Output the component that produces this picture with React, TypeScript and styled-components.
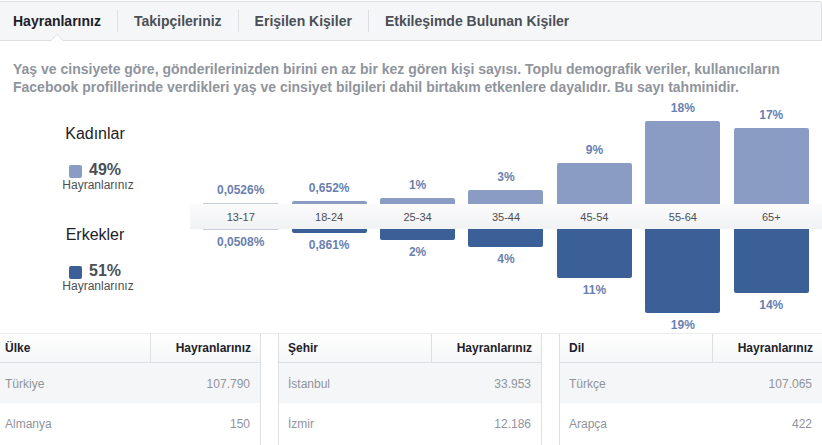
import React from "react";
import styled, { createGlobalStyle } from "styled-components";

const GlobalStyle = createGlobalStyle`
  html, body { margin: 0; padding: 0; background: #fff; }
  body { font-family: "Liberation Sans", Arial, Helvetica, sans-serif; overflow: hidden; }
  * { box-sizing: border-box; }
`;

const Page = styled.div`
  width: 822px;
  height: 445px;
  padding-top: 1px;
  overflow: hidden;
`;

const TabBar = styled.div`
  display: flex;
  align-items: center;
  height: 40px;
  background: #f5f6f7;
  border-top: 1px solid #dddfe2;
  border-bottom: 1px solid #dddfe2;
  border-right: 1px solid #dddfe2;
  border-top-right-radius: 3px;
  padding-left: 13px;
`;

const Tab = styled.div<{ $active?: boolean; $first?: boolean }>`
  position: relative;
  display: flex;
  align-items: center;
  height: 22px;
  padding: 0 16px 0 ${(p) => (p.$first ? "0" : "16px")};
  border-left: ${(p) => (p.$first ? "none" : "1px solid #dddfe2")};
  font-size: 14px;
  font-weight: bold;
  color: ${(p) => (p.$active ? "#1d2129" : "#4b4f56")};
  white-space: nowrap;
`;

const Caret = styled.span`
  position: absolute;
  left: 37px;
  bottom: -9px;
  width: 0;
  height: 0;
  border-left: 7px solid transparent;
  border-right: 7px solid transparent;
  border-bottom: 7px solid #dddfe2;
  &::after {
    content: "";
    position: absolute;
    left: -6px;
    top: 1px;
    border-left: 6px solid transparent;
    border-right: 6px solid transparent;
    border-bottom: 6px solid #fff;
  }
`;

const Description = styled.p`
  margin: 0;
  padding: 19px 13px 0;
  font-size: 14px;
  line-height: 18px;
  font-weight: bold;
  color: #90949c;
  height: 54px;
  white-space: nowrap;
`;

const Chart = styled.div`
  display: grid;
  grid-template-columns: 190px 1fr;
  height: 239px;
  border-bottom: 1px solid #e9ebee;
`;

const Legend = styled.div`
  display: flex;
  flex-direction: column;
  align-items: center;
  padding-top: 29px;
`;

const LegendGroup = styled.div<{ $gap: number }>`
  display: flex;
  flex-direction: column;
  align-items: center;
  margin-bottom: ${(p) => p.$gap}px;
`;

const LegendTitle = styled.div`
  font-size: 16px;
  line-height: 20px;
  color: #1d2129;
  margin-bottom: 17px;
`;

const LegendRow = styled.div`
  display: flex;
  align-items: center;
  gap: 7px;
  height: 18px;
`;

const Swatch = styled.span<{ $color: string }>`
  width: 13px;
  height: 13px;
  border-radius: 2px;
  background: ${(p) => p.$color};
  margin-top: 3px;
`;

const LegendPct = styled.span`
  font-size: 16px;
  font-weight: bold;
  color: #4b4f56;
`;

const LegendSub = styled.div`
  font-size: 12px;
  line-height: 13px;
  color: #4b4f56;
  margin-left: 6px;
`;

const Plot = styled.div`
  display: grid;
  grid-template-rows: 109px 25px 1fr;
`;

const BarRow = styled.div`
  display: grid;
  grid-template-columns: repeat(7, 1fr);
  padding: 0 6.5px;
`;

const BarCol = styled.div<{ $down?: boolean }>`
  display: flex;
  flex-direction: column;
  align-items: center;
  justify-content: ${(p) => (p.$down ? "flex-start" : "flex-end")};
`;

const Bar = styled.div<{ $down?: boolean; $tiny?: boolean }>`
  width: 75px;
  background: ${(p) => (p.$tiny ? "#c6ccd8" : p.$down ? "#3b6097" : "#8a9cc3")};
  border-radius: ${(p) => (p.$tiny ? "0" : p.$down ? "0 0 2px 2px" : "2px 2px 0 0")};
`;

const BarLabel = styled.div<{ $down?: boolean }>`
  font-size: 12px;
  line-height: 14px;
  font-weight: bold;
  color: #6a7fb0;
  margin: ${(p) => (p.$down ? "5px 0 0" : "0 0 6px")};
`;

const Axis = styled.div`
  display: grid;
  grid-template-columns: repeat(7, 1fr);
  padding: 0 6.5px;
  background: linear-gradient(#fbfbfc, #f1f2f4);
  align-items: center;
`;

const AxisLabel = styled.div`
  text-align: center;
  font-size: 11px;
  color: #4b4f56;
`;

const Tables = styled.div`
  display: grid;
  grid-template-columns: 261px 264px 1fr;
  column-gap: 17px;
`;

const Table = styled.div<{ $left?: boolean; $right?: boolean }>`
  display: grid;
  grid-template-columns: 1fr 110px;
  grid-auto-rows: 40px;
  grid-template-rows: 29px;
  border-left: ${(p) => (p.$left ? "1px solid #dddfe2" : "none")};
  border-right: ${(p) => (p.$right ? "1px solid #dddfe2" : "none")};
  height: 111px;
`;

const HeadCell = styled.div<{ $num?: boolean; $pl: number }>`
  display: flex;
  align-items: center;
  justify-content: ${(p) => (p.$num ? "flex-end" : "flex-start")};
  padding: 0 9px 0 ${(p) => (p.$num ? 0 : p.$pl)}px;
  background: linear-gradient(#ffffff, #f5f6f7);
  border-bottom: 1px solid #dddfe2;
  border-left: ${(p) => (p.$num ? "1px solid #dddfe2" : "none")};
  font-size: 12px;
  font-weight: bold;
  color: #1d2129;
`;

const Cell = styled.div<{ $num?: boolean; $shade?: boolean; $pl: number }>`
  display: flex;
  align-items: center;
  justify-content: ${(p) => (p.$num ? "flex-end" : "flex-start")};
  padding: 1px 10px 0 ${(p) => (p.$num ? 0 : p.$pl)}px;
  background: ${(p) => (p.$shade ? "#f5f6f7" : "#fff")};
  font-size: 12px;
  color: #90949c;
`;

type Group = { age: string; f: number; fl: string; m: number; ml: string };

const groups: Group[] = [
  { age: "13-17", f: 1, fl: "0,0526%", m: 1, ml: "0,0508%" },
  { age: "18-24", f: 3, fl: "0,652%", m: 4, ml: "0,861%" },
  { age: "25-34", f: 6, fl: "1%", m: 11, ml: "2%" },
  { age: "35-44", f: 14, fl: "3%", m: 18, ml: "4%" },
  { age: "45-54", f: 41, fl: "9%", m: 49, ml: "11%" },
  { age: "55-64", f: 83, fl: "18%", m: 84, ml: "19%" },
  { age: "65+", f: 76, fl: "17%", m: 64, ml: "14%" },
];

const tables = [
  { key: "Ülke", pl: 5, rows: [["Türkiye", "107.790"], ["Almanya", "150"]], left: false, right: true },
  { key: "Şehir", pl: 9, rows: [["İstanbul", "33.953"], ["İzmir", "12.186"]], left: true, right: true },
  { key: "Dil", pl: 9, rows: [["Türkçe", "107.065"], ["Arapça", "422"]], left: true, right: false },
];

export default function App() {
  return (
    <Page>
      <GlobalStyle />
      <TabBar>
        <Tab $first $active>
          Hayranlarınız
          <Caret />
        </Tab>
        <Tab>Takipçileriniz</Tab>
        <Tab>Erişilen Kişiler</Tab>
        <Tab>Etkileşimde Bulunan Kişiler</Tab>
      </TabBar>
      <Description>
        Yaş ve cinsiyete göre, gönderilerinizden birini en az bir kez gören kişi sayısı. Toplu demografik veriler, kullanıcıların
        <br />
        Facebook profillerinde verdikleri yaş ve cinsiyet bilgileri dahil birtakım etkenlere dayalıdır. Bu sayı tahminidir.
      </Description>
      <Chart>
        <Legend>
          <LegendGroup $gap={33}>
            <LegendTitle>Kadınlar</LegendTitle>
            <LegendRow>
              <Swatch $color="#8a9cc3" />
              <LegendPct>49%</LegendPct>
            </LegendRow>
            <LegendSub>Hayranlarınız</LegendSub>
          </LegendGroup>
          <LegendGroup $gap={0}>
            <LegendTitle>Erkekler</LegendTitle>
            <LegendRow>
              <Swatch $color="#3b6097" />
              <LegendPct>51%</LegendPct>
            </LegendRow>
            <LegendSub>Hayranlarınız</LegendSub>
          </LegendGroup>
        </Legend>
        <Plot>
          <BarRow>
            {groups.map((g) => (
              <BarCol key={g.age}>
                <BarLabel>{g.fl}</BarLabel>
                <Bar $tiny={g.f <= 1} style={{ height: g.f }} />
              </BarCol>
            ))}
          </BarRow>
          <Axis>
            {groups.map((g) => (
              <AxisLabel key={g.age}>{g.age}</AxisLabel>
            ))}
          </Axis>
          <BarRow>
            {groups.map((g) => (
              <BarCol key={g.age} $down>
                <Bar $down $tiny={g.m <= 1} style={{ height: g.m }} />
                <BarLabel $down>{g.ml}</BarLabel>
              </BarCol>
            ))}
          </BarRow>
        </Plot>
      </Chart>
      <Tables>
        {tables.map((t) => (
          <Table key={t.key} $left={t.left} $right={t.right}>
            <HeadCell $pl={t.pl}>{t.key}</HeadCell>
            <HeadCell $num $pl={t.pl}>Hayranlarınız</HeadCell>
            {t.rows.map((r, i) => (
              <React.Fragment key={r[0]}>
                <Cell $shade={i === 0} $pl={t.pl}>{r[0]}</Cell>
                <Cell $shade={i === 0} $num $pl={t.pl}>{r[1]}</Cell>
              </React.Fragment>
            ))}
          </Table>
        ))}
      </Tables>
    </Page>
  );
}
